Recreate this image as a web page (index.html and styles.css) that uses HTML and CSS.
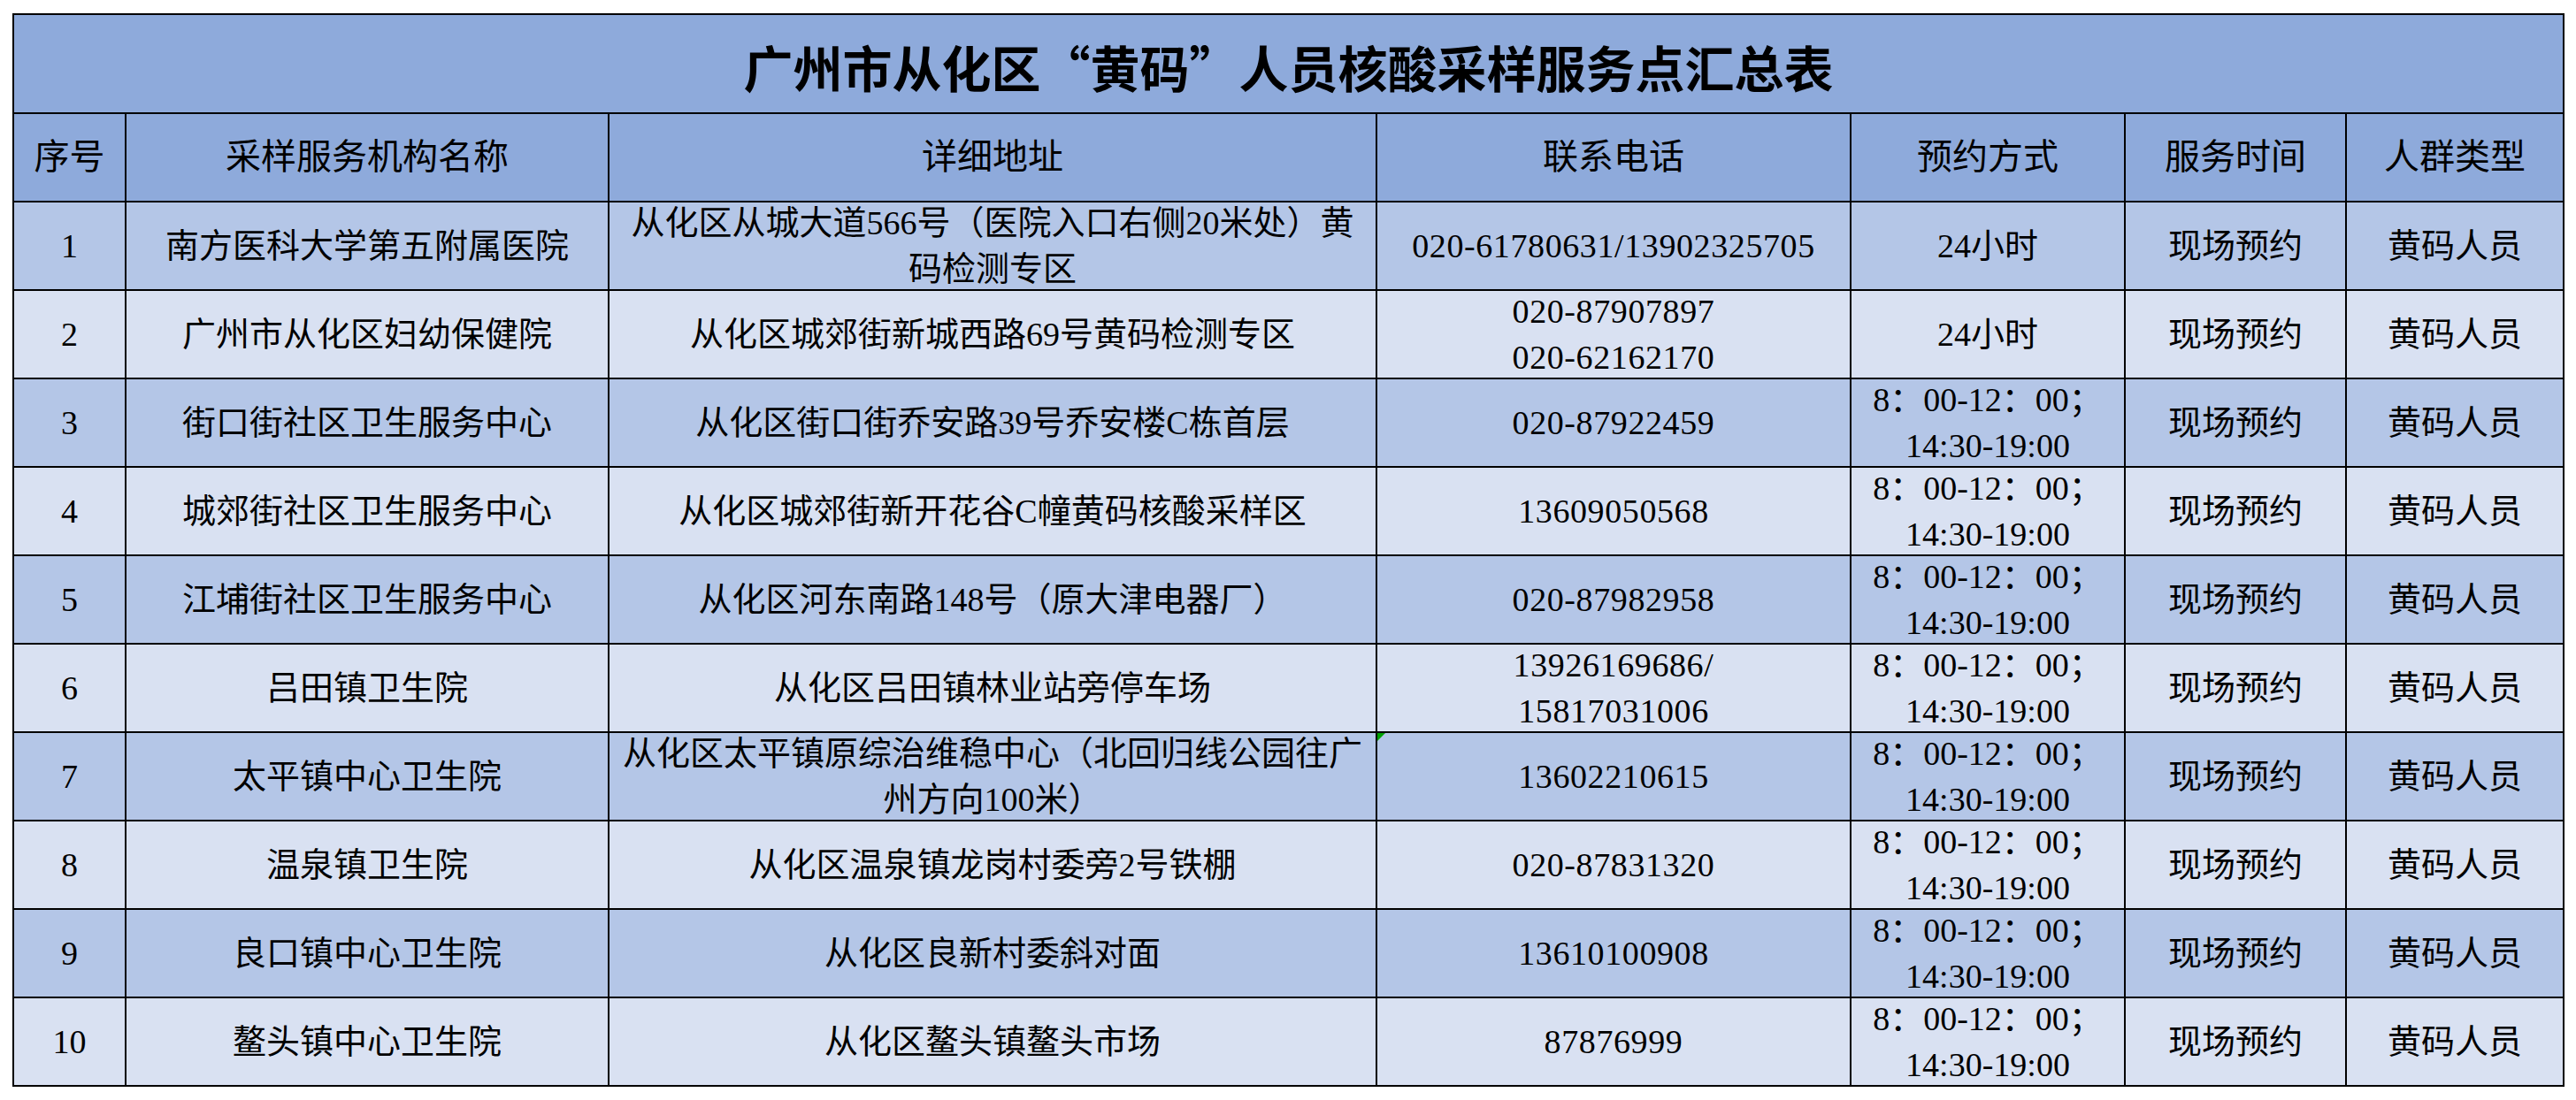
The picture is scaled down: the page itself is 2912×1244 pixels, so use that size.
FILE: index.html
```html
<!DOCTYPE html>
<html lang="zh-CN">
<head>
<meta charset="utf-8">
<title>广州市从化区“黄码”人员核酸采样服务点汇总表</title>
<link rel="stylesheet" href="styles.css">
</head>
<body>
<table class="sheet">
  <colgroup>
    <col class="c-no">
    <col class="c-name">
    <col class="c-addr">
    <col class="c-tel">
    <col class="c-way">
    <col class="c-time">
    <col class="c-type">
  </colgroup>
  <thead>
    <tr class="title-row"><th colspan="7" class="title">广州市从化区“黄码”人员核酸采样服务点汇总表</th></tr>
    <tr class="head-row">
      <th>序号</th><th>采样服务机构名称</th><th>详细地址</th><th>联系电话</th><th>预约方式</th><th>服务时间</th><th>人群类型</th>
    </tr>
  </thead>
  <tbody>
    <tr class="odd">
      <td>1</td><td>南方医科大学第五附属医院</td><td><span class="two">从化区从城大道566号（医院入口右侧20米处）黄<br>码检测专区</span></td><td class="num">020-61780631/13902325705</td><td>24小时</td><td>现场预约</td><td>黄码人员</td>
    </tr>
    <tr class="even">
      <td>2</td><td>广州市从化区妇幼保健院</td><td>从化区城郊街新城西路69号黄码检测专区</td><td class="num"><span class="two">020-87907897<br>020-62162170</span></td><td>24小时</td><td>现场预约</td><td>黄码人员</td>
    </tr>
    <tr class="odd">
      <td>3</td><td>街口街社区卫生服务中心</td><td>从化区街口街乔安路39号乔安楼C栋首层</td><td class="num">020-87922459</td><td><span class="two">8：00-12：00；<br>14:30-19:00</span></td><td>现场预约</td><td>黄码人员</td>
    </tr>
    <tr class="even">
      <td>4</td><td>城郊街社区卫生服务中心</td><td>从化区城郊街新开花谷C幢黄码核酸采样区</td><td class="num">13609050568</td><td><span class="two">8：00-12：00；<br>14:30-19:00</span></td><td>现场预约</td><td>黄码人员</td>
    </tr>
    <tr class="odd">
      <td>5</td><td>江埔街社区卫生服务中心</td><td>从化区河东南路148号（原大津电器厂）</td><td class="num">020-87982958</td><td><span class="two">8：00-12：00；<br>14:30-19:00</span></td><td>现场预约</td><td>黄码人员</td>
    </tr>
    <tr class="even">
      <td>6</td><td>吕田镇卫生院</td><td>从化区吕田镇林业站旁停车场</td><td class="num"><span class="two">13926169686/<br>15817031006</span></td><td><span class="two">8：00-12：00；<br>14:30-19:00</span></td><td>现场预约</td><td>黄码人员</td>
    </tr>
    <tr class="odd">
      <td>7</td><td>太平镇中心卫生院</td><td><span class="two">从化区太平镇原综治维稳中心（北回归线公园往广<br>州方向100米）</span></td><td class="num flagged">13602210615</td><td><span class="two">8：00-12：00；<br>14:30-19:00</span></td><td>现场预约</td><td>黄码人员</td>
    </tr>
    <tr class="even">
      <td>8</td><td>温泉镇卫生院</td><td>从化区温泉镇龙岗村委旁2号铁棚</td><td class="num">020-87831320</td><td><span class="two">8：00-12：00；<br>14:30-19:00</span></td><td>现场预约</td><td>黄码人员</td>
    </tr>
    <tr class="odd">
      <td>9</td><td>良口镇中心卫生院</td><td>从化区良新村委斜对面</td><td class="num">13610100908</td><td><span class="two">8：00-12：00；<br>14:30-19:00</span></td><td>现场预约</td><td>黄码人员</td>
    </tr>
    <tr class="even">
      <td>10</td><td>鳌头镇中心卫生院</td><td>从化区鳌头镇鳌头市场</td><td class="num">87876999</td><td><span class="two">8：00-12：00；<br>14:30-19:00</span></td><td>现场预约</td><td>黄码人员</td>
    </tr>
  </tbody>
</table>
</body>
</html>
```

FILE: styles.css
```css
html, body {
  margin: 0;
  padding: 0;
  background: #ffffff;
}

body {
  padding: 15px 0 0 14px;
  font-family: "Liberation Serif", "Noto Sans CJK SC", serif;
  color: #000000;
}

.sheet {
  border-collapse: collapse;
  table-layout: fixed;
  width: 2883px;
  border: 2px solid #000000;
}

.c-no { width: 127px; }
.c-name { width: 546px; }
.c-addr { width: 868px; }
.c-tel { width: 536px; }
.c-way { width: 310px; }
.c-time { width: 250px; }
.c-type { width: 246px; }

.sheet th,
.sheet td {
  border: 2px solid #000000;
  padding: 0;
  text-align: center;
  vertical-align: middle;
  white-space: nowrap;
  font-weight: normal;
}

.sheet td {
  font-size: 38px;
  line-height: 52px;
  height: 98px;
}

.two {
  display: block;
  line-height: 52px;
  margin: -3px 0;
}

.title-row th.title {
  height: 104px;
  padding-top: 6px;
  background: #8eaadb;
  font-family: "Noto Sans CJK SC", sans-serif;
  font-weight: bold;
  font-size: 56px;
  line-height: 64px;
}

.head-row th {
  height: 98px;
  background: #8eaadb;
  font-size: 40px;
  line-height: 52px;
}

.odd td {
  background: #b4c6e7;
}

.even td {
  background: #d9e1f2;
}

.num {
  letter-spacing: 0.6px;
}

.flagged {
  position: relative;
}

.flagged::before {
  content: "";
  position: absolute;
  left: 0;
  top: 0;
  width: 0;
  height: 0;
  border-top: 9px solid #00a000;
  border-right: 9px solid transparent;
}
```
